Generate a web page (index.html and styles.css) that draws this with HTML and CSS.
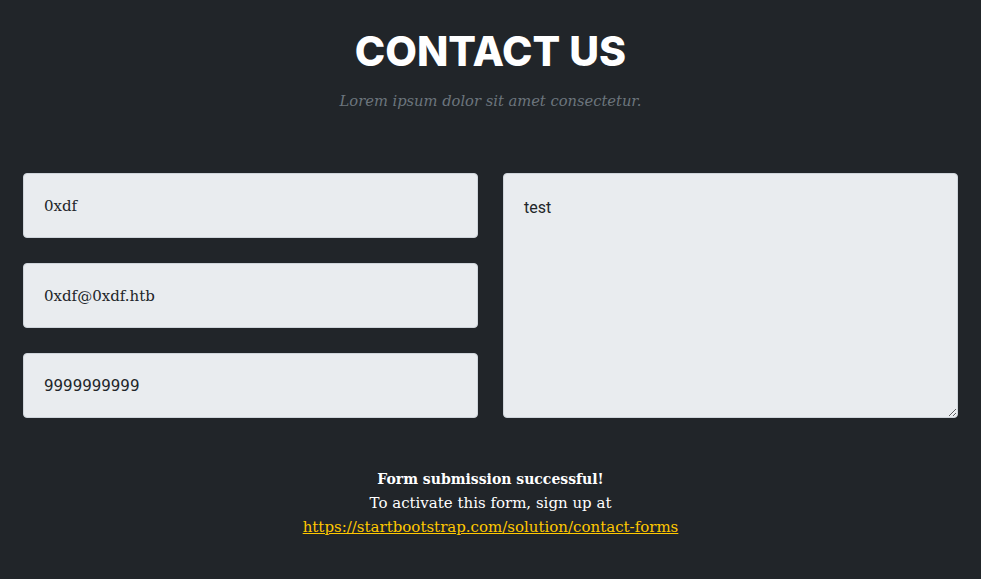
FILE: index.html
```html
<!DOCTYPE html>
<html>
<head>
<meta charset="utf-8">
<link rel="stylesheet" href="styles.css">
</head>
<body>
<section class="contact">
  <div class="head">
    <h2 class="title">CONTACT US</h2>
    <h3 class="subtitle">Lorem ipsum dolor sit amet consectetur.</h3>
  </div>
  <form class="form">
    <div class="col left">
      <input class="field" type="text" value="0xdf">
      <input class="field" type="email" value="0xdf@0xdf.htb">
      <input class="field tel" type="tel" value="9999999999">
    </div>
    <div class="col right">
      <textarea class="field area">test</textarea>
    </div>
  </form>
  <div class="msg">
    <div class="ok">Form submission successful!</div>
    <div>To activate this form, sign up at</div>
    <a href="#" class="link">https://startbootstrap.com/solution/contact-forms</a>
  </div>
</section>
</body>
</html>
```
FILE: styles.css
```css
html, body {
  margin: 0;
  padding: 0;
  background: #212529;
  height: 100%;
}
body {
  font-family: "DejaVu Serif", "Liberation Serif", serif;
  color: #fff;
}
.contact {
  padding: 28px 23px 0;
}
.head {
  text-align: center;
}
.title {
  margin: 0;
  font-family: "Inter", "Open Sans", sans-serif;
  font-weight: 800;
  font-size: 41px;
  line-height: 46px;
  letter-spacing: 0;
  color: #fff;
}
.subtitle {
  margin: 16px 0 0;
  font-style: italic;
  font-weight: 400;
  font-size: 14.7px;
  line-height: 22px;
  color: #6c757d;
}
.form {
  margin-top: 61px;
  display: grid;
  grid-template-columns: 1fr 1fr;
  gap: 25px;
}
.col {
  display: flex;
  flex-direction: column;
  gap: 25px;
}
.field {
  box-sizing: border-box;
  height: 65px;
  width: 100%;
  margin: 0;
  padding: 0 20px;
  background: #e9ecef;
  border: 1px solid #ced4da;
  border-radius: 4px;
  font-family: "DejaVu Serif", serif;
  font-size: 15px;
  color: #212529;
  outline: none;
}
.tel {
  font-family: "DejaVu Sans", sans-serif;
}
.area {
  height: 245px;
  padding: 22px 20px;
  resize: vertical;
  font-family: "Roboto", "DejaVu Sans", sans-serif;
  font-size: 16px;
  line-height: 24px;
}
.msg {
  margin-top: 49px;
  text-align: center;
  font-size: 15px;
  line-height: 24px;
  color: #fff;
}
.ok {
  font-weight: 700;
  font-size: 14px;
}
.link {
  color: #ffc800;
  text-decoration: underline;
}
```
